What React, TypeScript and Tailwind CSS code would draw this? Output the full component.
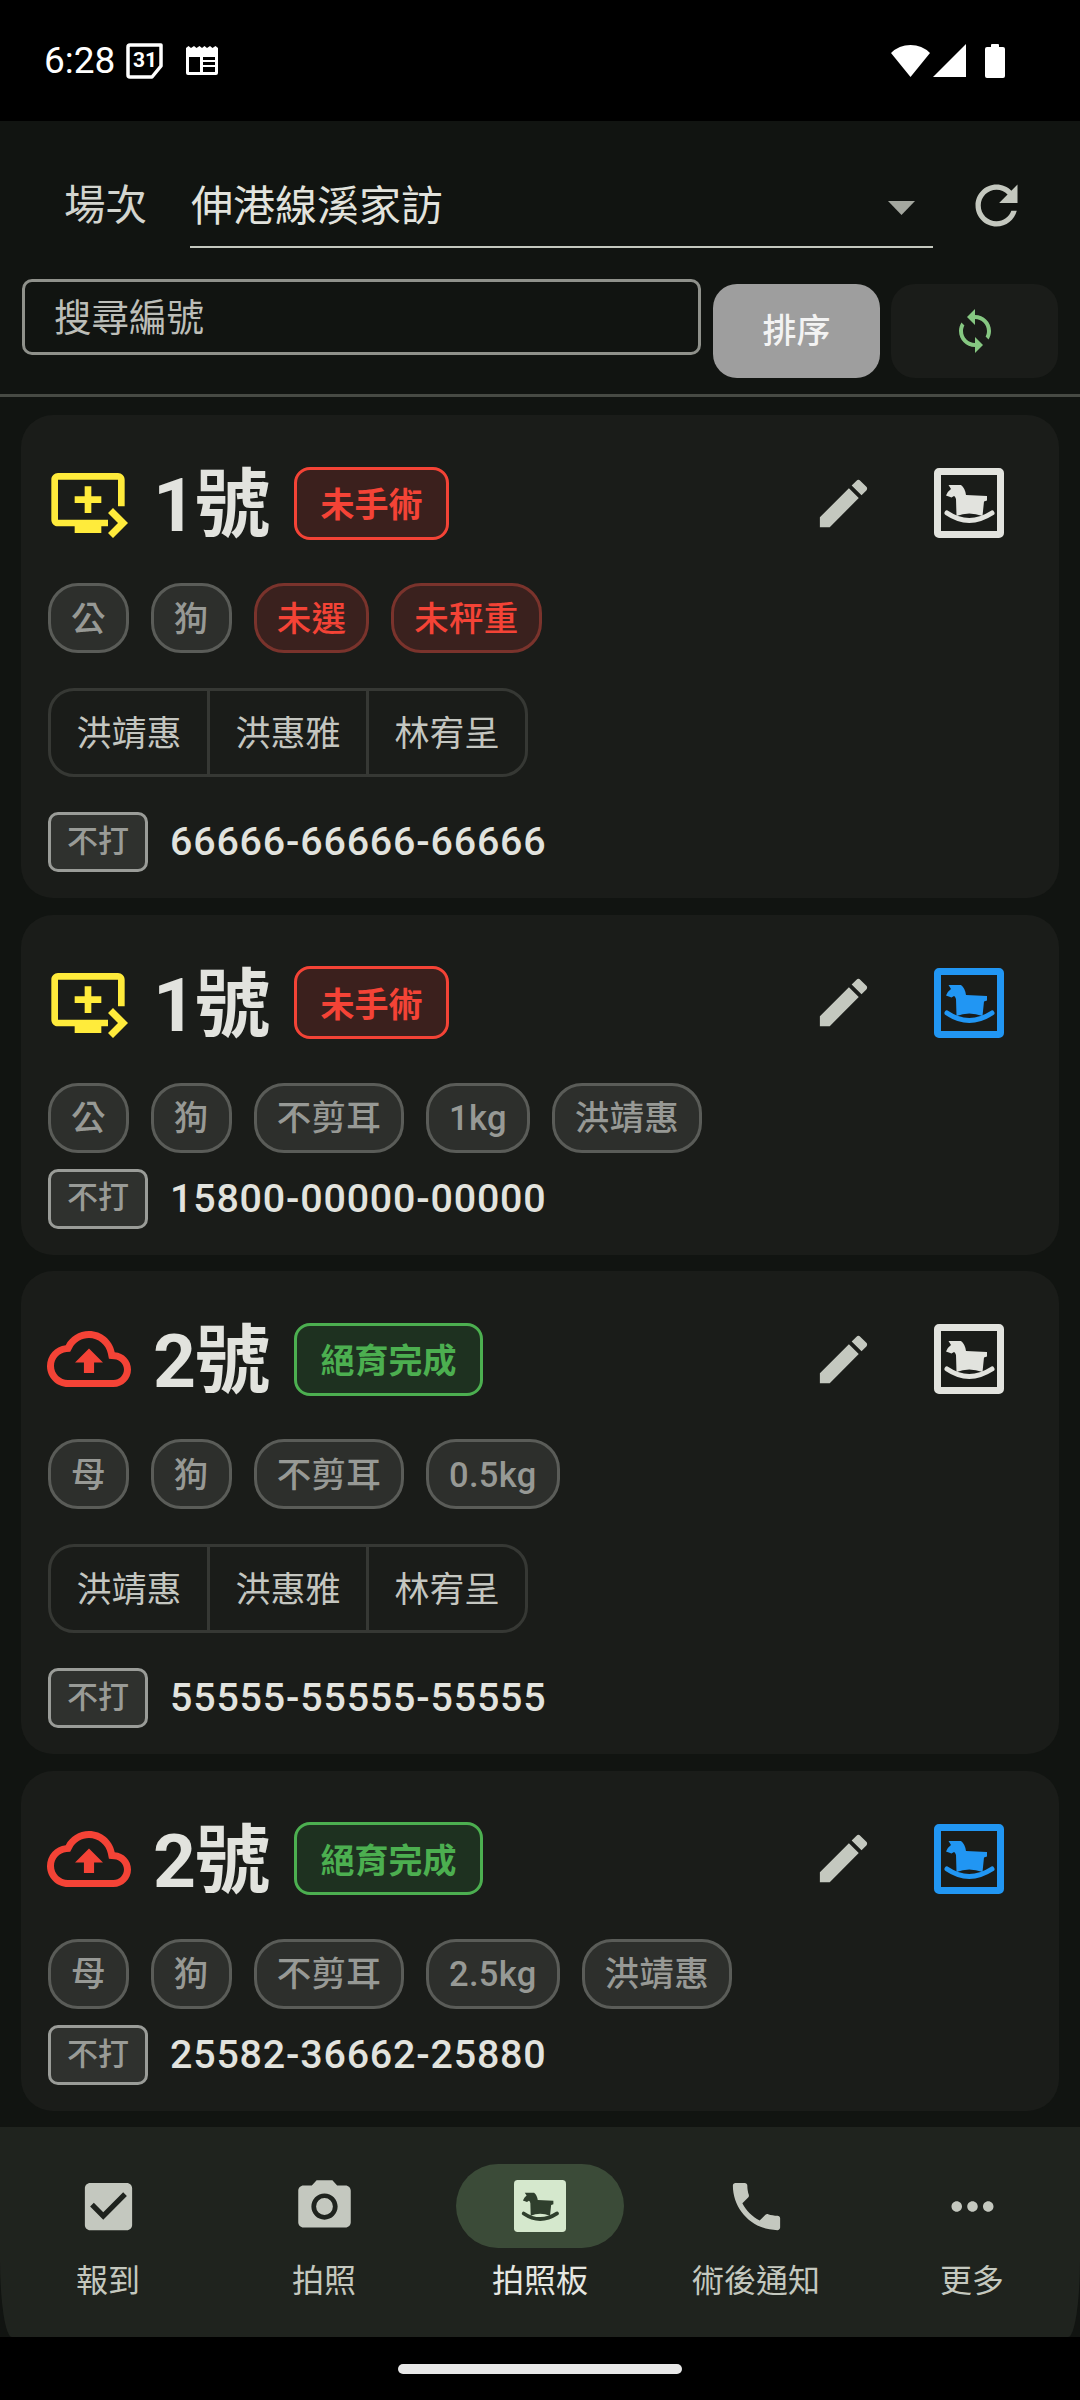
const PATHS = {
  queue:
    'M21 3H3c-1.11 0-2 .89-2 2v12c0 1.1.89 2 2 2h5v2h8v-2h2v-2H3V5h18v8h2V5c0-1.11-.9-2-2-2zm-8 7V7h-2v3H8v2h3v3h2v-3h3v-2h-3zm11 8l-4.5 4.5L18 21l3-3-3-3 1.5-1.5L24 18z',
  cloud:
    'M19.35 10.04C18.67 6.59 15.64 4 12 4 9.11 4 6.6 5.64 5.35 8.04 2.34 8.36 0 10.91 0 14c0 3.31 2.69 6 6 6h13c2.76 0 5-2.24 5-5 0-2.64-2.05-4.78-4.65-4.96zM19 18H6c-2.21 0-4-1.79-4-4 0-2.05 1.53-3.76 3.56-3.97l1.07-.11.5-.95C8.08 7.14 9.94 6 12 6c2.62 0 4.88 1.86 5.39 4.43l.3 1.5 1.53.11c1.56.1 2.78 1.41 2.78 2.96 0 1.65-1.35 3-3 3zM8 13h2.55v3h2.9v-3H16l-4-4z',
  pencil:
    'M20.71 7.04C21.1 6.65 21.1 6 20.71 5.63L18.37 3.29C18 2.9 17.35 2.9 16.96 3.29L15.12 5.12L18.87 8.87M3 17.25V21H6.75L17.81 9.93L14.06 6.18L3 17.25Z',
  refresh:
    'M17.65 6.35C16.2 4.9 14.21 4 12 4c-4.42 0-7.99 3.58-7.99 8s3.57 8 7.99 8c3.73 0 6.84-2.55 7.73-6h-2.08c-.82 2.33-3.04 4-5.65 4-3.31 0-6-2.69-6-6s2.69-6 6-6c1.66 0 3.14.69 4.22 1.78L13 11h7V4l-2.35 2.35z',
  sync: 'M12 4V1L8 5l4 4V6c3.31 0 6 2.69 6 6 0 1.01-.25 1.97-.7 2.8l1.46 1.46C19.54 15.03 20 13.57 20 12c0-4.42-3.58-8-8-8zm0 14c-3.31 0-6-2.69-6-6 0-1.01.25-1.97.7-2.8L5.24 7.74C4.46 8.97 4 10.43 4 12c0 4.42 3.58 8 8 8v3l4-4-4-4v3z',
  check:
    'M19 3H5c-1.1 0-2 .9-2 2v14c0 1.1.9 2 2 2h14c1.1 0 2-.9 2-2V5c0-1.1-.9-2-2-2zm-9 14l-5-5 1.41-1.41L10 14.17l7.59-7.59L19 8l-9 9z',
  camera:
    'M12 8.8a3.2 3.2 0 1 0 0 6.4 3.2 3.2 0 0 0 0-6.4zM9 2L7.17 4H4c-1.1 0-2 .9-2 2v12c0 1.1.9 2 2 2h16c1.1 0 2-.9 2-2V6c0-1.1-.9-2-2-2h-3.17L15 2H9zm3 15c-2.76 0-5-2.24-5-5s2.24-5 5-5 5 2.24 5 5-2.24 5-5 5z',
  phone:
    'M6.62 10.79c1.44 2.83 3.76 5.14 6.59 6.59l2.2-2.2c.27-.27.67-.36 1.02-.24 1.12.37 2.33.57 3.57.57.55 0 1 .45 1 1V20c0 .55-.45 1-1 1-9.39 0-17-7.61-17-17 0-.55.45-1 1-1h3.5c.55 0 1 .45 1 1 0 1.25.2 2.45.57 3.57.11.35.03.74-.25 1.02l-2.2 2.2z',
  more: 'M6 10c-1.1 0-2 .9-2 2s.9 2 2 2 2-.9 2-2-.9-2-2-2zm12 0c-1.1 0-2 .9-2 2s.9 2 2 2 2-.9 2-2-.9-2-2-2zm-6 0c-1.1 0-2 .9-2 2s.9 2 2 2 2-.9 2-2-.9-2-2-2z',
};

const HORSE =
  'M14.5 17H27Q31 20 32 27L53 28V32.5L50 33.5L48.5 48Q35 43 22.5 48L22 31Q21 28 20 28L17.5 29.5L12 27.5Q14 23 17 21Z';
const ROCKER = 'M13 45Q35 60 58 45';

function Icon({ d, className }: { d: string; className: string }) {
  return (
    <svg viewBox="0 0 24 24" fill="currentColor" className={className}>
      <path d={d} />
    </svg>
  );
}

function HorseFrame({ className }: { className: string }) {
  return (
    <svg viewBox="0 0 70 70" fill="currentColor" className={className}>
      <path
        fillRule="evenodd"
        d="M5 0h60a5 5 0 0 1 5 5v60a5 5 0 0 1-5 5H5a5 5 0 0 1-5-5V5a5 5 0 0 1 5-5zM7 7v56h56V7z"
      />
      <path d={HORSE} />
      <path d={ROCKER} fill="none" stroke="currentColor" strokeWidth="5" strokeLinecap="round" />
    </svg>
  );
}

function HorseFilled({ className }: { className: string }) {
  return (
    <svg viewBox="0 0 70 70" className={className}>
      <rect width="70" height="70" rx="5" fill="#d5e8cd" />
      <path d={HORSE} fill="#2f3f2d" />
      <path d={ROCKER} fill="none" stroke="#2f3f2d" strokeWidth="5" strokeLinecap="round" />
    </svg>
  );
}

function StatusBar() {
  return (
    <div className="h-[121px] shrink-0 flex items-center justify-between pl-[44px] pr-[75px] text-white">
      <div className="flex items-center">
        <span className="font-['Roboto',sans-serif] text-[37px] leading-none w-[69px]">6:28</span>
        <div className="relative ml-[13px] w-[37px] h-[36px]">
          <svg viewBox="0 0 37 36" fill="none" stroke="currentColor" strokeWidth="3.5" className="w-full h-full">
            <path d="M4 2H35V23L26 34H4Q2 34 2 32V4Q2 2 4 2Z" strokeLinejoin="round" />
          </svg>
          <span className="absolute left-[7px] top-[6px] font-['Roboto',sans-serif] font-bold text-[21px] leading-[22px]">
            31
          </span>
        </div>
        <svg viewBox="0 0 32 29" fill="currentColor" className="ml-[23px] w-[32px] h-[29px]">
          <path
            fillRule="evenodd"
            d="M0 2L2.5 0L5 2L8 0L10.5 2L13.5 0L16 2L18.5 0L21 2L24 0L26.5 2L29.5 0L32 2V27Q32 29 30 29H2Q0 29 0 27ZM3 11V26H14V11ZM17 11V14H29V11ZM17 16V19H29V16ZM17 21V26H29V21Z"
          />
        </svg>
      </div>
      <div className="flex items-center">
        <svg viewBox="0 0 39 32" fill="currentColor" className="w-[39px] h-[32px]">
          <path d="M19.5 32L0 8Q8 0 19.5 0T39 8Z" />
        </svg>
        <svg viewBox="0 0 33 33" fill="currentColor" className="ml-[3px] w-[33px] h-[33px]">
          <path d="M33 0V33H0Z" />
        </svg>
        <svg viewBox="0 0 20 34" fill="currentColor" className="ml-[19px] w-[20px] h-[34px]">
          <path d="M6 3V1Q6 0 7 0H13Q14 0 14 1V3H18Q20 3 20 5V32Q20 34 18 34H2Q0 34 0 32V5Q0 3 2 3Z" />
        </svg>
      </div>
    </div>
  );
}

function TopControls() {
  return (
    <div className="shrink-0">
      <div className="h-[127px] flex items-end pl-[64px]">
        <span className="w-[126px] h-[84px] flex items-center text-[41.5px] text-[#d3d5cf]">場次</span>
        <div className="w-[743px] h-[84px] flex items-center border-b-2 border-[#c4c8bf] pl-px pr-[18px]">
          <span className="text-[42px] text-[#e2e3dd] pt-[2px]">伸港線溪家訪</span>
          <svg viewBox="0 0 27 14" fill="#a4a79f" className="ml-auto w-[27px] h-[14px] mt-[5px]">
            <path d="M0 0H27L13.5 14Z" />
          </svg>
        </div>
        <Icon d={PATHS.refresh} className="ml-[32px] mb-[11px] w-[63px] h-[63px] text-[#c4c8bf]" />
      </div>
      <div className="mt-[31px] pl-[22px] flex items-start">
        <div className="w-[679px] h-[76px] border-[3px] border-[#8f918b] rounded-[10px] pl-[29px] pt-[2px] flex items-center text-[37.5px] text-[#bcbeb8]">
          搜尋編號
        </div>
        <button className="ml-[12px] mt-[5px] w-[167px] h-[94px] rounded-[24px] bg-[#9e9e9e] text-[34px] font-medium text-[#f3f3f3]">
          排序
        </button>
        <button className="ml-[11px] mt-[5px] w-[167px] h-[94px] rounded-[24px] bg-[#1a1c19] flex items-center justify-center">
          <Icon d={PATHS.sync} className="w-[48px] h-[48px] text-[#86c882]" />
        </button>
      </div>
      <div className="mt-[16px] h-[3px] bg-[#474a44]" />
    </div>
  );
}

type Tone = 'gray' | 'red';

function Chip({ label, tone }: { label: string; tone: Tone }) {
  const cls =
    tone === 'red'
      ? 'border-[#7a332c] bg-[#3a211e] text-[#f44336]'
      : 'border-[#5a5c58] bg-[#2d2f2c] text-[#979995]';
  return (
    <span
      className={`h-[70px] px-[20px] pt-[3px] flex items-center rounded-[30px] border-[3px] text-[34.5px] tracking-[0.3px] font-medium ${cls}`}
    >
      {label}
    </span>
  );
}

type Patient = {
  num: string;
  upload: boolean;
  done: boolean;
  chips: { label: string; tone: Tone }[];
  vets?: string[];
  phone: string;
  blue: boolean;
};

function PatientCard({ p }: { p: Patient }) {
  return (
    <div className="mx-[21px] rounded-[32px] bg-[#1a1c19] px-[27px] pt-[46px] pb-[26px]">
      <div className="h-[84px] flex items-center">
        <div className="w-[105px] shrink-0">
          {p.upload ? (
            <Icon d={PATHS.cloud} className="-ml-px w-[84px] h-[84px] text-[#f44336]" />
          ) : (
            <Icon d={PATHS.queue} className="w-[80px] h-[80px] text-[#ffeb3b]" />
          )}
        </div>
        <span className="w-[116px] pt-[5px] text-[75px] leading-none font-bold text-[#e2e3de] tracking-[-1px] whitespace-nowrap">
          {p.num}號
        </span>
        <span
          className={`ml-[25px] h-[73px] rounded-[16px] border-[3px] px-[23.5px] pt-[5px] flex items-center text-[34px] font-bold ${
            p.done ? 'border-[#4caf50] bg-[#1e3120] text-[#4caf50]' : 'border-[#f44336] bg-[#3b201d] text-[#f44336]'
          }`}
        >
          {p.done ? '絕育完成' : '未手術'}
        </span>
        <Icon d={PATHS.pencil} className="ml-auto w-[63px] h-[63px] text-[#c4c8bf]" />
        <HorseFrame className={`ml-[59px] mr-[28px] w-[70px] h-[70px] ${p.blue ? 'text-[#2196f3]' : 'text-[#e2e3de]'}`} />
      </div>
      <div className="mt-[38px] flex gap-[22px]">
        {p.chips.map((c) => (
          <Chip key={c.label} label={c.label} tone={c.tone} />
        ))}
      </div>
      {p.vets && (
        <div className="mt-[35px] w-[480px] h-[89px] flex rounded-[26px] border-[3px] border-[#363834] divide-x-[3px] divide-[#363834]">
          {p.vets.map((v) => (
            <span key={v} className="flex-1 pt-[5px] flex items-center justify-center text-[35px] text-[#c4c6c0]">
              {v}
            </span>
          ))}
        </div>
      )}
      <div className={`${p.vets ? 'mt-[35px]' : 'mt-[16px]'} flex items-center`}>
        <span className="w-[100px] h-[60px] rounded-[10px] border-[3px] border-[#9a9c98] bg-[#2f312e] flex items-center justify-center text-[31px] font-medium text-[#999b97]">
          不打
        </span>
        <span className="ml-[22px] text-[39.4px] leading-none font-medium tracking-[0.82px] text-[#e2e3de]">{p.phone}</span>
      </div>
    </div>
  );
}

const VETS = ['洪靖惠', '洪惠雅', '林宥呈'];

const PATIENTS: Patient[] = [
  {
    num: '1',
    upload: false,
    done: false,
    chips: [
      { label: '公', tone: 'gray' },
      { label: '狗', tone: 'gray' },
      { label: '未選', tone: 'red' },
      { label: '未秤重', tone: 'red' },
    ],
    vets: VETS,
    phone: '66666-66666-66666',
    blue: false,
  },
  {
    num: '1',
    upload: false,
    done: false,
    chips: [
      { label: '公', tone: 'gray' },
      { label: '狗', tone: 'gray' },
      { label: '不剪耳', tone: 'gray' },
      { label: '1kg', tone: 'gray' },
      { label: '洪靖惠', tone: 'gray' },
    ],
    phone: '15800-00000-00000',
    blue: true,
  },
  {
    num: '2',
    upload: true,
    done: true,
    chips: [
      { label: '母', tone: 'gray' },
      { label: '狗', tone: 'gray' },
      { label: '不剪耳', tone: 'gray' },
      { label: '0.5kg', tone: 'gray' },
    ],
    vets: VETS,
    phone: '55555-55555-55555',
    blue: false,
  },
  {
    num: '2',
    upload: true,
    done: true,
    chips: [
      { label: '母', tone: 'gray' },
      { label: '狗', tone: 'gray' },
      { label: '不剪耳', tone: 'gray' },
      { label: '2.5kg', tone: 'gray' },
      { label: '洪靖惠', tone: 'gray' },
    ],
    phone: '25582-36662-25880',
    blue: true,
  },
];

const NAV = [
  { label: '報到', d: PATHS.check },
  { label: '拍照', d: PATHS.camera },
  { label: '拍照板', d: '' },
  { label: '術後通知', d: PATHS.phone },
  { label: '更多', d: PATHS.more },
];

function BottomNav() {
  return (
    <nav className="h-[210px] shrink-0 grid grid-cols-5 bg-[#1f231e] rounded-bl-[12px_77px] rounded-br-[12px_77px] pt-[37px]">
      {NAV.map((item) => (
        <div key={item.label} className="flex flex-col items-center">
          <div
            className={`w-[168px] h-[84px] rounded-[42px] flex items-center justify-center ${
              item.d ? '' : 'bg-[#3b4b38]'
            }`}
          >
            {item.d ? (
              <Icon d={item.d} className="w-[63px] h-[63px] text-[#c4c8bf]" />
            ) : (
              <HorseFilled className="w-[52px] h-[52px]" />
            )}
          </div>
          <span className={`mt-[12px] text-[32px] leading-[42px] ${item.d ? 'text-[#c4c8bf]' : 'text-[#e6e7e2]'}`}>
            {item.label}
          </span>
        </div>
      ))}
    </nav>
  );
}

export default function App() {
  return (
    <div className="w-[1080px] h-[2400px] bg-black flex flex-col overflow-hidden font-['Roboto','Noto_Sans_CJK_TC',sans-serif]">
      <StatusBar />
      <main className="flex-1 min-h-0 bg-[#111411] flex flex-col">
        <TopControls />
        <div className="mt-[18px] flex flex-col gap-[16.6px]">
          {PATIENTS.map((p) => (
            <PatientCard key={p.phone} p={p} />
          ))}
        </div>
      </main>
      <div className="shrink-0 bg-[#111411]">
        <BottomNav />
      </div>
      <div className="h-[63px] shrink-0 bg-black pt-[27px] flex justify-center">
        <div className="w-[284px] h-[10px] rounded-full bg-[#e8e8e8]" />
      </div>
    </div>
  );
}
